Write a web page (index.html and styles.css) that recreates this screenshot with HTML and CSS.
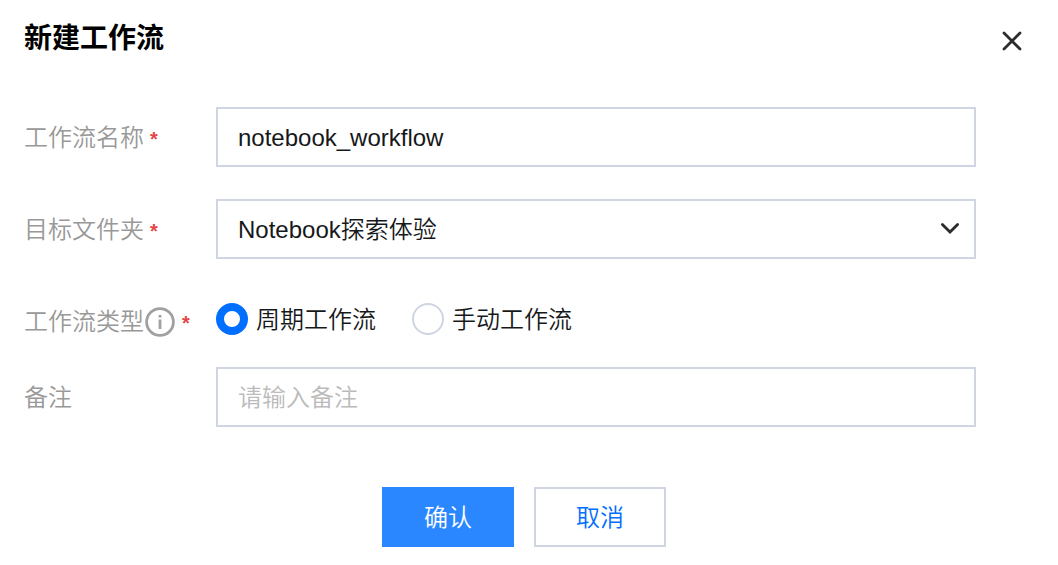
FILE: index.html
```html
<!DOCTYPE html>
<html lang="zh-CN">
<head>
<meta charset="utf-8">
<meta name="viewport" content="width=device-width, initial-scale=1">
<title>新建工作流</title>
<link rel="stylesheet" href="styles.css">
</head>
<body>
<main class="dialog" role="dialog" aria-labelledby="dialog-title">
  <header class="dialog-header">
    <h1 class="dialog-title" id="dialog-title">新建工作流</h1>
    <button class="close" type="button" aria-label="关闭">
      <svg class="icon" width="20" height="20" viewBox="0 0 20 20" aria-hidden="true"><path d="M2 2 18 18M18 2 2 18"/></svg>
    </button>
  </header>
  <form class="form">
    <div class="row">
      <label class="label" for="name">工作流名称<span class="required">*</span></label>
      <input class="control" id="name" type="text" value="notebook_workflow" required>
    </div>
    <div class="row">
      <label class="label" for="folder">目标文件夹<span class="required">*</span></label>
      <div class="select">
        <select class="control" id="folder" required><option>Notebook探索体验</option></select>
        <svg class="icon chevron" width="20" height="12" viewBox="0 0 20 12" aria-hidden="true"><path d="M2.4 2.4 10 10 17.6 2.4"/></svg>
      </div>
    </div>
    <div class="row row-radios" role="radiogroup" aria-labelledby="type-label">
      <span class="label" id="type-label">工作流类型<svg class="info" width="32" height="32" viewBox="0 0 32 32" aria-hidden="true"><circle cx="16" cy="16" r="13.4"/><path d="M16 13.4V23M16 9V11.4"/></svg><span class="required">*</span></span>
      <div class="radios">
        <label class="option"><input class="radio" type="radio" name="type" checked><span class="option-text">周期工作流</span></label>
        <label class="option"><input class="radio" type="radio" name="type"><span class="option-text">手动工作流</span></label>
      </div>
    </div>
    <div class="row">
      <label class="label" for="note">备注</label>
      <input class="control" id="note" type="text" placeholder="请输入备注">
    </div>
    <footer class="actions">
      <button class="button button-primary" type="button">确认</button>
      <button class="button" type="button">取消</button>
    </footer>
  </form>
</main>
</body>
</html>
```
FILE: styles.css
```css
*, *::before, *::after {
  box-sizing: border-box;
}

body {
  margin: 0;
  background: #fff;
  color: #16181a;
  font: 350 24px/32px "Liberation Sans", "Noto Sans CJK SC", sans-serif;
}

input, select, button {
  font: inherit;
  color: inherit;
}

.dialog {
  padding: 16px 24px;
}

.dialog-header {
  display: flex;
  align-items: flex-start;
  justify-content: space-between;
}

.dialog-title {
  margin: 0;
  color: #000;
  font-size: 28px;
  font-weight: 700;
  line-height: 46px;
}

.close {
  display: flex;
  margin: 9px 10px 0 0;
  padding: 6px 2px;
  border: 0;
  background: none;
  cursor: pointer;
}

.icon {
  fill: none;
  stroke: #2b2c2d;
  stroke-width: 2.8;
  stroke-linecap: round;
}

.form {
  display: grid;
  gap: 32px;
  padding: 45px 58px 0 0;
}

.row {
  display: grid;
  grid-template-columns: 192px 1fr;
  align-items: center;
}

.label {
  display: flex;
  align-items: center;
  padding-top: 2px;
  color: #999;
}

.required {
  margin-left: 6px;
  padding-top: 2px;
  color: #e54545;
  font-size: 20px;
  font-weight: 700;
  line-height: 26px;
}

.info {
  fill: none;
  stroke: #a0a0a0;
  stroke-width: 2.8;
}

.control {
  display: block;
  width: 100%;
  height: 60px;
  padding: 2px 20px 0;
  border: 2px solid #cfd5e2;
  border-radius: 0;
  background: #fff;
  appearance: none;
}

.control::placeholder {
  color: #bbb;
  opacity: 1;
}

.select {
  position: relative;
}

.chevron {
  position: absolute;
  top: 23px;
  right: 16px;
  pointer-events: none;
}

.row-radios {
  align-items: end;
  padding-top: 12px;
}

.row-radios .label {
  margin-bottom: -3px;
  padding-top: 0;
}

.radios {
  display: flex;
  gap: 36px;
}

.option {
  display: flex;
  gap: 8px;
}

.option-text {
  padding-top: 2px;
  line-height: 30px;
}

.radio {
  width: 32px;
  height: 32px;
  margin: 0;
  border: 2px solid #cfd5e2;
  border-radius: 50%;
  background: #fff;
  appearance: none;
}

.radio:checked {
  border: 8px solid #006eff;
}

.actions {
  display: flex;
  justify-content: center;
  gap: 20px;
  padding: 28px 0 0 48px;
}

.button {
  width: 132px;
  height: 60px;
  padding: 2px 0 0;
  border: 2px solid #cfd5e2;
  background: #fff;
  color: #006eff;
  cursor: pointer;
}

.button-primary {
  border-color: #2a87ff;
  background: #2a87ff;
  color: #fff;
}
```
